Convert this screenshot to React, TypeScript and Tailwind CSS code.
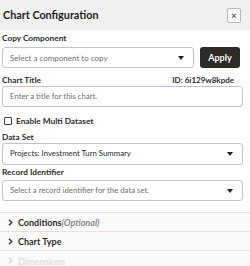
import React from "react";

const Caret = () => (
  <svg width="6" height="4" viewBox="0 0 6 4" className="shrink-0">
    <path d="M0 0 H6 L3 4 Z" fill="#222" />
  </svg>
);

const Chevron = ({ color = "#333" }: { color?: string }) => (
  <svg width="5" height="7" viewBox="0 0 5 7" className="shrink-0">
    <path d="M1 0.8 L3.8 3.5 L1 6.2" fill="none" stroke={color} strokeWidth="1.4" />
  </svg>
);

export default function App() {
  return (
    <div
      className="w-[250px] h-[266px] overflow-hidden bg-white text-[#2b2b2b]"
      style={{ fontFamily: "Lato, 'Open Sans', sans-serif" }}
    >
      <div className="h-[30px] bg-[#f0f0ef] flex items-center justify-between pl-[3px] pr-[9px]">
        <div className="text-[10.8px] font-bold leading-none text-[#1f1f1f]">Chart Configuration</div>
        <button className="w-[14px] h-[15px] border border-[#b9b9b9] rounded-[2px] bg-[#fafafa] flex items-center justify-center text-[10px] leading-none text-[#333]">
          ×
        </button>
      </div>

      <div className="pl-[2px] pr-[7px]">
        <div className="mt-[3px] h-[10px] text-[8.3px] font-bold leading-[10px]">Copy Component</div>
        <div className="mt-[4px] flex items-center gap-[6px]">
          <div className="w-[192px] h-[21px] border border-[#c4c4c4] rounded-[3px] flex items-center justify-between pl-[7px] pr-[9px]">
            <span className="text-[8px] text-[#6f6f6f] leading-none">Select a component to copy</span>
            <Caret />
          </div>
          <button className="w-[40px] h-[21px] bg-[#2e2a28] rounded-[3px] text-white text-[9px] font-bold leading-none">
            Apply
          </button>
        </div>

        <div className="mt-[7px] h-[10px] flex justify-between items-center pr-[9px]">
          <span className="text-[8.3px] font-bold leading-[10px]">Chart Title</span>
          <span className="text-[8px] font-bold leading-[10px]">ID: 6i129w8kpde</span>
        </div>
        <div className="mt-[1px] h-[21px] border border-[#c4c4c4] rounded-[3px] flex items-center pl-[7px]">
          <span className="text-[7.8px] text-[#6f6f6f] leading-none">Enter a title for this chart.</span>
        </div>

        <div className="mt-[9px] h-[10px] flex items-center gap-[4px] pl-[2px]">
          <div className="w-[8px] h-[8px] border border-[#444] rounded-[1px]" />
          <span className="text-[8.3px] font-bold leading-[10px]">Enable Multi Dataset</span>
        </div>

        <div className="mt-[6px] h-[10px] text-[8.3px] font-bold leading-[10px]">Data Set</div>
        <div className="mt-[1px] h-[22px] border border-[#c4c4c4] rounded-[3px] flex items-center justify-between pl-[7px] pr-[9px]">
          <span className="text-[7.8px] text-[#2b2b2b] leading-none">Projects: Investment Turn Summary</span>
          <Caret />
        </div>

        <div className="mt-[2px] h-[10px] text-[8.3px] font-bold leading-[10px]">Record Identifier</div>
        <div className="mt-[3px] h-[21px] border border-[#c4c4c4] rounded-[3px] flex items-center justify-between pl-[7px] pr-[9px]">
          <span className="text-[7.8px] text-[#6f6f6f] leading-none">Select a record identifier for the data set.</span>
          <Caret />
        </div>
      </div>

      <div className="mt-[11px] border-t border-[#e6e4e1] bg-[#fbfaf9]">
        <div className="h-[19px] flex items-center gap-[5px] pl-[8px] border-b border-[#e6e4e1]">
          <Chevron />
          <span className="text-[9px] font-bold leading-none">
            Conditions<span className="italic text-[#8a8a8a]">(Optional)</span>
          </span>
        </div>
        <div className="h-[19px] flex items-center gap-[5px] pl-[8px] border-b border-[#e6e4e1]">
          <Chevron />
          <span className="text-[9px] font-bold leading-none">Chart Type</span>
        </div>
        <div className="h-[19px] flex items-start pt-[6px] gap-[5px] pl-[8px]">
          <Chevron color="#d6d6d6" />
          <span className="text-[9px] font-bold leading-none text-[#e0e0e0]">Dimensions</span>
        </div>
      </div>
    </div>
  );
}
